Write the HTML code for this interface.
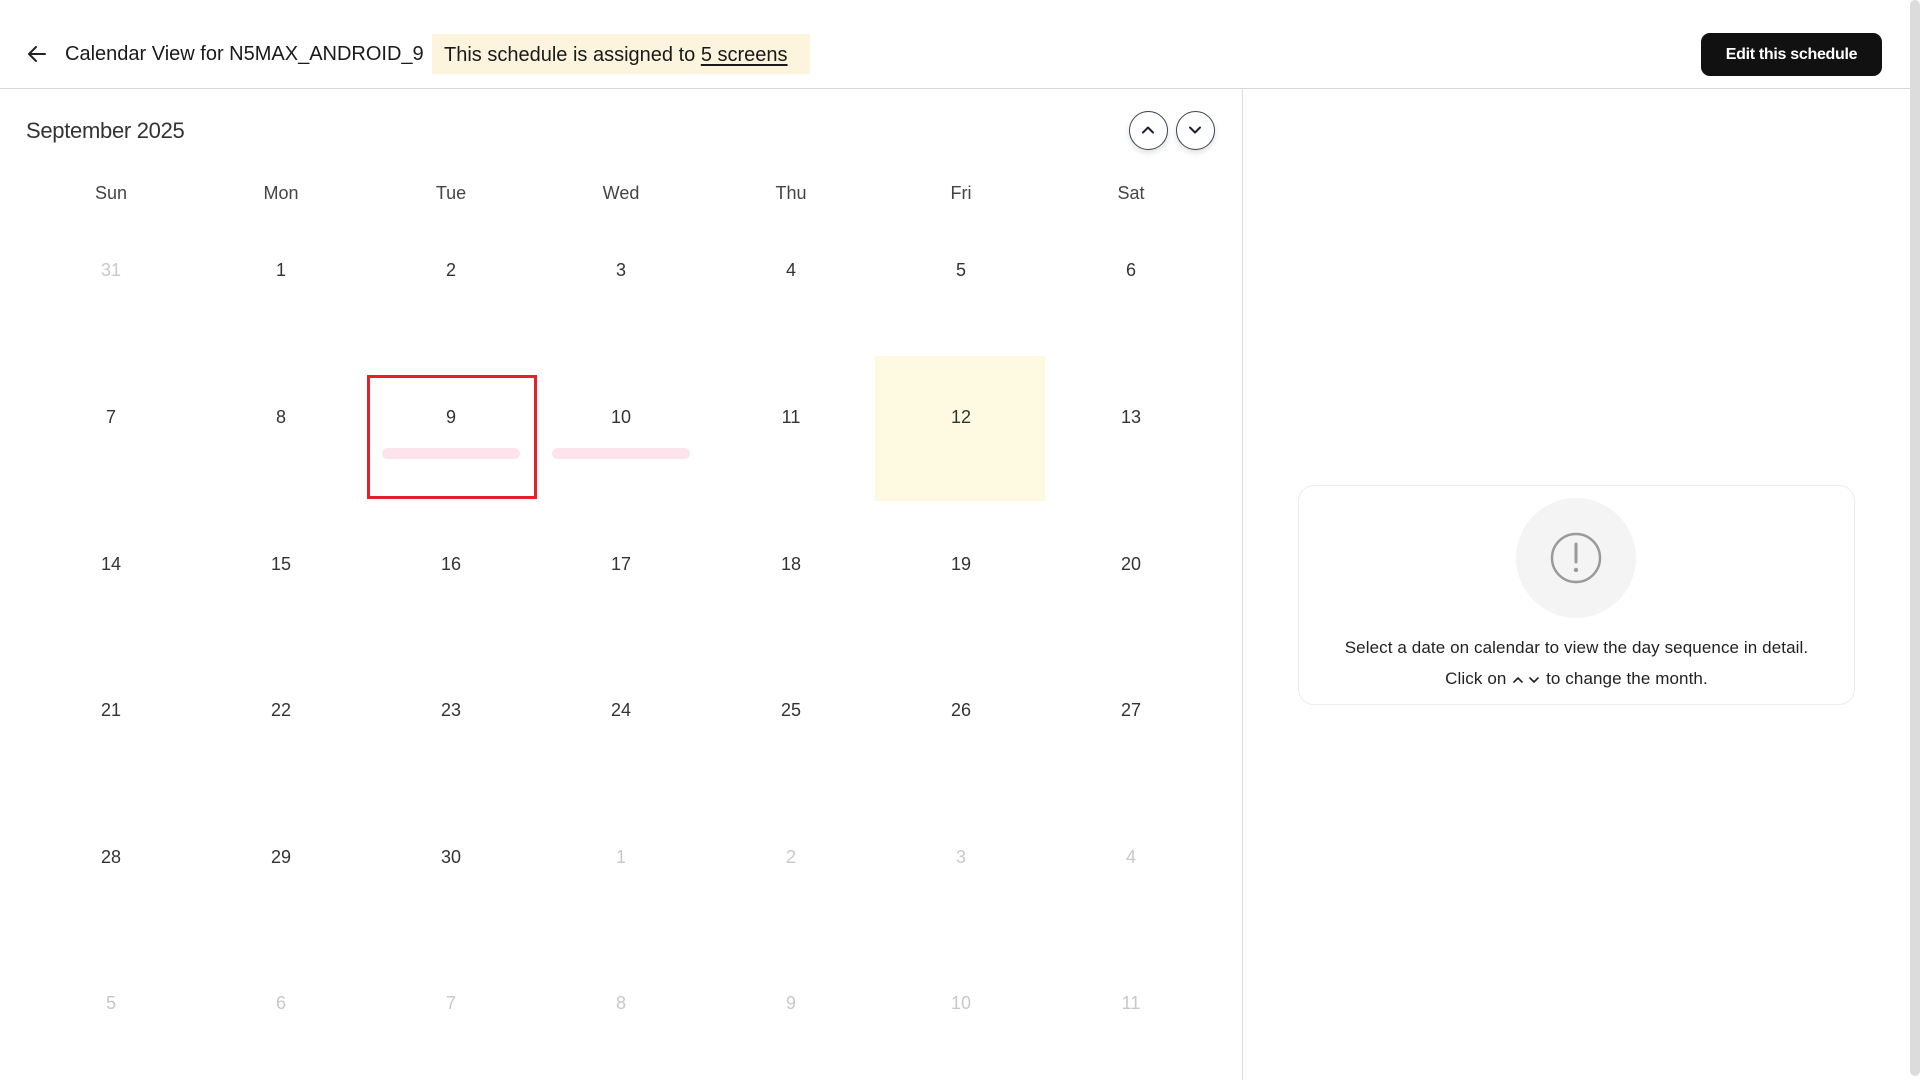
<!DOCTYPE html>
<html><head><meta charset="utf-8"><style>
*{margin:0;padding:0;box-sizing:border-box}
body{width:1920px;height:1080px;overflow:hidden;background:#fff;font-family:"Liberation Sans",sans-serif;color:#222;position:relative}
.a{position:absolute}
.hdr{left:0;top:0;width:1910px;height:89px;border-bottom:1.5px solid #d6d6d6}
.title{left:65px;top:43px;font-size:20px;color:#1a1a1a;letter-spacing:0}
.badge{left:432px;top:34px;width:378px;height:40px;background:#fdf4dd;font-size:20px;line-height:42px;padding-left:12px;letter-spacing:0;color:#1a1a1a}
.badge u{text-decoration-thickness:2px;text-underline-offset:3px}
.btn{left:1701px;top:33px;width:181px;height:43px;background:#111;border-radius:9px;color:#fff;font-size:16px;font-weight:bold;text-align:center;line-height:43px;letter-spacing:-0.3px}
.div{left:1242px;top:89px;width:1px;height:991px;background:#ddd}
.sb{left:1910px;top:0;width:10px;height:1076px;background:#dcdcdc;border-radius:5px}
.month{left:26px;top:118px;font-size:22px;color:#333;letter-spacing:-0.3px}
.nav{width:39px;height:39px;border:1.5px solid #3a4454;border-radius:50%;top:111px;box-shadow:0 3px 6px rgba(0,0,0,.12);background:#fff}
.nav svg{position:absolute;left:10px;top:10px}
.dh{width:170px;text-align:center;font-size:18px;color:#444;top:183px}
.n{width:170px;text-align:center;font-size:18px;color:#333;height:24px;line-height:24px}
.f{color:#c8c8c8}
.card{left:1298px;top:485px;width:557px;height:220px;border:1px solid #ececec;border-radius:16px}
.gc{left:1516px;top:498px;width:120px;height:120px;border-radius:50%;background:#f4f4f4}
.msg{left:1298px;width:557px;text-align:center;font-size:17px;color:#222;letter-spacing:0.1px}
.g{position:absolute;left:26px;top:0}
</style></head><body>
<div class="a hdr"></div>
<svg class="a" style="left:27px;top:45px" width="20" height="18" viewBox="0 0 20 18"><path d="M18 9H3M9 2L2 9l7 7" fill="none" stroke="#222" stroke-width="2" stroke-linecap="round" stroke-linejoin="round"/></svg>
<div class="a title">Calendar View for N5MAX_ANDROID_9</div>
<div class="a badge">This schedule is assigned to <u>5 screens</u></div>
<div class="a btn">Edit this schedule</div>
<div class="a div"></div>
<div class="a sb"></div>
<div class="a month">September 2025</div>
<div class="a nav" style="left:1129px"><svg width="16" height="16" viewBox="0 0 16 16"><path d="M3 10.5L8 5.5l5 5" fill="none" stroke="#1a2230" stroke-width="2" stroke-linecap="round" stroke-linejoin="round"/></svg></div>
<div class="a nav" style="left:1176px"><svg width="16" height="16" viewBox="0 0 16 16"><path d="M3 5.5L8 10.5l5-5" fill="none" stroke="#1a2230" stroke-width="2" stroke-linecap="round" stroke-linejoin="round"/></svg></div>

<div class="a dh" style="left:26px">Sun</div><div class="a dh" style="left:196px">Mon</div><div class="a dh" style="left:366px">Tue</div><div class="a dh" style="left:536px">Wed</div><div class="a dh" style="left:706px">Thu</div><div class="a dh" style="left:876px">Fri</div><div class="a dh" style="left:1046px">Sat</div>

<div class="a" style="left:875px;top:356px;width:170px;height:145px;background:#fef9e1"></div>
<div class="a" style="left:367px;top:375px;width:170px;height:124px;border:3px solid #e5202a"></div>
<div class="a" style="left:382px;top:448px;width:138px;height:11px;border-radius:6px;background:#fde3ea"></div>
<div class="a" style="left:552px;top:448px;width:138px;height:11px;border-radius:6px;background:#fde3ea"></div>

<div class="a n f" style="left:26px;top:258px">31</div><div class="a n" style="left:196px;top:258px">1</div><div class="a n" style="left:366px;top:258px">2</div><div class="a n" style="left:536px;top:258px">3</div><div class="a n" style="left:706px;top:258px">4</div><div class="a n" style="left:876px;top:258px">5</div><div class="a n" style="left:1046px;top:258px">6</div>
<div class="a n" style="left:26px;top:405px">7</div><div class="a n" style="left:196px;top:405px">8</div><div class="a n" style="left:366px;top:405px">9</div><div class="a n" style="left:536px;top:405px">10</div><div class="a n" style="left:706px;top:405px">11</div><div class="a n" style="left:876px;top:405px">12</div><div class="a n" style="left:1046px;top:405px">13</div>
<div class="a n" style="left:26px;top:552px">14</div><div class="a n" style="left:196px;top:552px">15</div><div class="a n" style="left:366px;top:552px">16</div><div class="a n" style="left:536px;top:552px">17</div><div class="a n" style="left:706px;top:552px">18</div><div class="a n" style="left:876px;top:552px">19</div><div class="a n" style="left:1046px;top:552px">20</div>
<div class="a n" style="left:26px;top:698px">21</div><div class="a n" style="left:196px;top:698px">22</div><div class="a n" style="left:366px;top:698px">23</div><div class="a n" style="left:536px;top:698px">24</div><div class="a n" style="left:706px;top:698px">25</div><div class="a n" style="left:876px;top:698px">26</div><div class="a n" style="left:1046px;top:698px">27</div>
<div class="a n" style="left:26px;top:845px">28</div><div class="a n" style="left:196px;top:845px">29</div><div class="a n" style="left:366px;top:845px">30</div><div class="a n f" style="left:536px;top:845px">1</div><div class="a n f" style="left:706px;top:845px">2</div><div class="a n f" style="left:876px;top:845px">3</div><div class="a n f" style="left:1046px;top:845px">4</div>
<div class="a n f" style="left:26px;top:991px">5</div><div class="a n f" style="left:196px;top:991px">6</div><div class="a n f" style="left:366px;top:991px">7</div><div class="a n f" style="left:536px;top:991px">8</div><div class="a n f" style="left:706px;top:991px">9</div><div class="a n f" style="left:876px;top:991px">10</div><div class="a n f" style="left:1046px;top:991px">11</div>

<div class="a card"></div>
<div class="a gc"></div>
<svg class="a" style="left:1547px;top:529px" width="58" height="58" viewBox="0 0 58 58"><circle cx="29" cy="29" r="24" fill="none" stroke="#9a9a9a" stroke-width="2.5"/><path d="M29 15v18" stroke="#9a9a9a" stroke-width="3" stroke-linecap="round"/><circle cx="29" cy="41" r="2.2" fill="#9a9a9a"/></svg>
<div class="a msg" style="top:638px">Select a date on calendar to view the day sequence in detail.</div>
<div class="a msg" style="top:669px">Click on <svg width="30" height="12" viewBox="0 0 30 12" style="vertical-align:middle"><path d="M3 8l4-4 4 4M19 4l4 4 4-4" fill="none" stroke="#222" stroke-width="1.6" stroke-linecap="round" stroke-linejoin="round"/></svg> to change the month.</div>
</body></html>
